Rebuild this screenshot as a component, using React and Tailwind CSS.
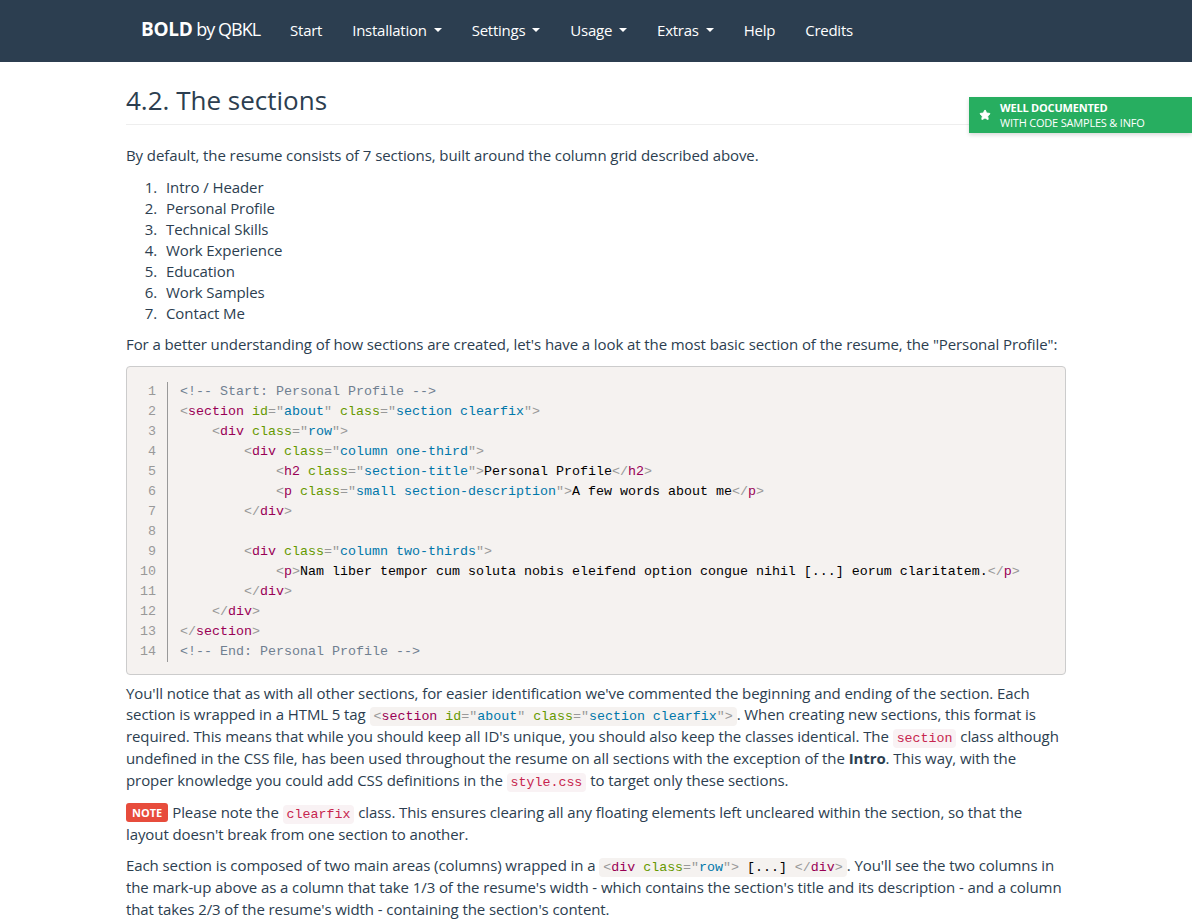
import { Star } from 'lucide-react';

const P = ({ children }) => <span className="text-[#999]">{children}</span>;
const N = ({ children }) => <span className="text-[#905]">{children}</span>;
const A = ({ children }) => <span className="text-[#690]">{children}</span>;
const V = ({ children }) => <span className="text-[#07a]">{children}</span>;
const C = ({ children }) => <span className="text-[#708090]">{children}</span>;

// attribute: name="value"
const Attr = ({ name, value }) => (
  <>
    {' '}
    <A>{name}</A>
    <P>=</P>
    <P>"</P>
    <V>{value}</V>
    <P>"</P>
  </>
);

const codeLines = [
  <C>{'<!-- Start: Personal Profile -->'}</C>,
  <>
    <P>&lt;</P><N>section</N><Attr name="id" value="about" /><Attr name="class" value="section clearfix" /><P>&gt;</P>
  </>,
  <>
    {'    '}<P>&lt;</P><N>div</N><Attr name="class" value="row" /><P>&gt;</P>
  </>,
  <>
    {'        '}<P>&lt;</P><N>div</N><Attr name="class" value="column one-third" /><P>&gt;</P>
  </>,
  <>
    {'            '}<P>&lt;</P><N>h2</N><Attr name="class" value="section-title" /><P>&gt;</P>Personal Profile<P>&lt;/</P><N>h2</N><P>&gt;</P>
  </>,
  <>
    {'            '}<P>&lt;</P><N>p</N><Attr name="class" value="small section-description" /><P>&gt;</P>A few words about me<P>&lt;/</P><N>p</N><P>&gt;</P>
  </>,
  <>
    {'        '}<P>&lt;/</P><N>div</N><P>&gt;</P>
  </>,
  <>{' '}</>,
  <>
    {'        '}<P>&lt;</P><N>div</N><Attr name="class" value="column two-thirds" /><P>&gt;</P>
  </>,
  <>
    {'            '}<P>&lt;</P><N>p</N><P>&gt;</P>Nam liber tempor cum soluta nobis eleifend option congue nihil [...] eorum claritatem.<P>&lt;/</P><N>p</N><P>&gt;</P>
  </>,
  <>
    {'        '}<P>&lt;/</P><N>div</N><P>&gt;</P>
  </>,
  <>
    {'    '}<P>&lt;/</P><N>div</N><P>&gt;</P>
  </>,
  <>
    <P>&lt;/</P><N>section</N><P>&gt;</P>
  </>,
  <C>{'<!-- End: Personal Profile -->'}</C>,
];

const Caret = () => (
  <span className="inline-block w-0 h-0 ml-[7px] border-x-4 border-t-4 border-x-transparent border-t-white align-middle"></span>
);

const Code = ({ children }) => (
  <code className="px-1 py-0.5 rounded bg-[#f9f2f4] text-[#c7254e] text-[13.3px] leading-[15px] tracking-normal font-['Liberation_Mono',monospace]">
    {children}
  </code>
);

const sections = [
  'Intro / Header',
  'Personal Profile',
  'Technical Skills',
  'Work Experience',
  'Education',
  'Work Samples',
  'Contact Me',
];

export default function App() {
  const nav = [
    { label: 'Start' },
    { label: 'Installation', drop: true },
    { label: 'Settings', drop: true },
    { label: 'Usage', drop: true },
    { label: 'Extras', drop: true },
    { label: 'Help' },
    { label: 'Credits' },
  ];

  return (
    <div className="min-h-screen bg-white text-[#2c3e50] text-[15px] leading-[21px] tracking-[-0.09px] font-['Open_Sans',sans-serif]">
      {/* Navbar */}
      <header className="bg-[#2c3e50] h-[62px]">
        <div className="w-[970px] mx-auto pl-[15px] pb-[2px] h-full flex items-center">
          <a className="pl-[15px] pr-[15px] text-white whitespace-nowrap">
            <span className="font-bold text-[19px] tracking-[-0.3px]">BOLD</span>{' '}
            <span className="text-[18px] tracking-[-1px]">by QBKL</span>
          </a>
          <nav className="flex items-center">
            {nav.map((item) => (
              <a key={item.label} className="px-[15px] text-white text-[15px] tracking-[-0.25px] flex items-center">
                {item.label}
                {item.drop && <Caret />}
              </a>
            ))}
          </nav>
        </div>
      </header>

      {/* Badge */}
      <div className="absolute top-[97px] right-0 w-[223px] h-[36px] bg-[#27ae60] text-white flex items-center shadow-[0_2px_4px_rgba(0,0,0,0.15)]">
        <Star className="w-[12px] h-[12px] ml-[10px] mr-[9px] fill-white" strokeWidth={2} />
        <div className="text-[11px] leading-[15px] tracking-[-0.2px]">
          <div className="font-bold">WELL DOCUMENTED</div>
          <div>WITH CODE SAMPLES &amp; INFO</div>
        </div>
      </div>

      <main className="w-[940px] mx-auto">
        <h1 className="mt-6 pb-[9px] border-b border-[#eee] text-[26px] leading-[1.1] font-normal tracking-normal">4.2. The sections</h1>

        <p className="mt-5 mb-[11px]">By default, the resume consists of 7 sections, built around the column grid described above.</p>

        <ol className="mb-[10px]">
          {sections.map((s, i) => (
            <li key={s} className="flex">
              <span className="w-[31px] text-right">{i + 1}.</span>
              <span className="ml-[9px]">{s}</span>
            </li>
          ))}
        </ol>

        <p className="mb-[11px]">
          For a better understanding of how sections are created, let's have a look at the most basic section of the resume, the "Personal Profile":
        </p>

        {/* Code block */}
        <pre className="mb-[8px] pt-[15px] pb-[12px] bg-[#f5f2f0] border border-[#ccc] rounded text-[13.33px] leading-[20px] tracking-normal text-black font-['Liberation_Mono',monospace] flex">
          <div className="w-[41px] pr-[11px] border-r border-[#999] text-right text-[#999] select-none">
            {codeLines.map((_, i) => (
              <div key={i}>{i + 1}</div>
            ))}
          </div>
          <div className="pl-[12px]">
            {codeLines.map((l, i) => (
              <div key={i} className="whitespace-pre">{l}</div>
            ))}
          </div>
        </pre>

        <p className="mb-[10px] leading-[21.75px]">
          You'll notice that as with all other sections, for easier identification we've commented the beginning and ending of the section. Each section is wrapped in a HTML 5 tag{' '}
          <code className="px-1 py-0.5 rounded bg-[#f5f2f0] text-[13.3px] leading-[15px] tracking-normal font-['Liberation_Mono',monospace]">
            <P>&lt;</P><N>section</N><Attr name="id" value="about" /><Attr name="class" value="section clearfix" /><P>&gt;</P>
          </code>
          . When creating new sections, this format is required. This means that while you should keep all ID's unique, you should also keep the classes identical. The{' '}
          <Code>section</Code> class although undefined in the CSS file, has been used throughout the resume on all sections with the exception of the{' '}
          <strong className="font-bold">Intro</strong>. This way, with the proper knowledge you could add CSS definitions in the <Code>style.css</Code> to target only these sections.
        </p>

        <p className="mb-[10px] leading-[22px]">
          <span className="inline-block bg-[#e74c3c] text-white text-[11px] font-bold leading-[19px] px-[6px] rounded-[3px] mr-1 align-[1px] tracking-normal">NOTE</span>
          Please note the <Code>clearfix</Code> class. This ensures clearing all any floating elements left uncleared within the section, so that the layout doesn't break from one section to another.
        </p>

        <p className="mb-[10px] leading-[21.75px]">
          Each section is composed of two main areas (columns) wrapped in a{' '}
          <code className="px-1 py-0.5 rounded bg-[#f5f2f0] text-[13.3px] leading-[15px] tracking-normal font-['Liberation_Mono',monospace] text-black">
            <P>&lt;</P><N>div</N><Attr name="class" value="row" /><P>&gt;</P> [...] <P>&lt;/</P><N>div</N><P>&gt;</P>
          </code>
          . You'll see the two columns in the mark-up above as a column that take 1/3 of the resume's width - which contains the section's title and its description - and a column that takes 2/3 of the resume's width - containing the section's content.
        </p>
      </main>
    </div>
  );
}
